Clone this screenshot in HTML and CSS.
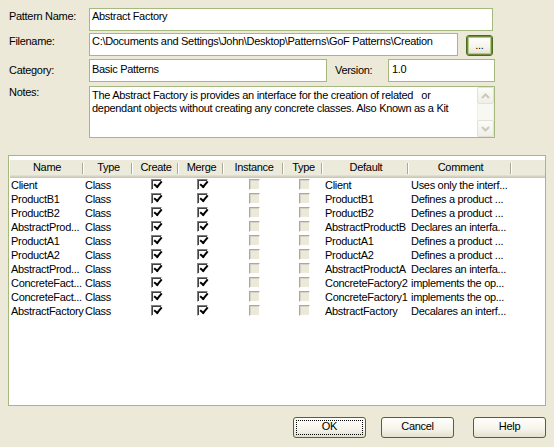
FILE: index.html
```html
<!DOCTYPE html>
<html lang="en">
<head>
  <meta charset="UTF-8">
  <meta name="viewport" content="width=device-width, initial-scale=1.0">
  <title>Pattern Properties</title>
  <link rel="stylesheet" href="styles.css">
</head>
<body>
  <div class="dialog">
    <div class="form-row row-name">
      <label class="lbl">Pattern Name:</label>
      <div class="field f-name">Abstract Factory</div>
    </div>
    <div class="form-row row-file">
      <label class="lbl">Filename:</label>
      <div class="field f-file">C:\Documents and Settings\John\Desktop\Patterns\GoF Patterns\Creation</div>
      <button class="btn btn-browse">...</button>
    </div>
    <div class="form-row row-cat">
      <label class="lbl">Category:</label>
      <div class="field f-cat">Basic Patterns</div>
      <label class="lbl lbl-ver">Version:</label>
      <div class="field f-ver">1.0</div>
    </div>
    <div class="form-row row-notes">
      <label class="lbl">Notes:</label>
      <div class="notes">
        <div class="notes-text">The Abstract Factory is provides an interface for the creation of related &nbsp; or<br>dependant objects without creating any concrete classes. Also Known as a Kit</div>
        <div class="vscroll">
          <span class="sb-btn"><svg width="9" height="6" viewBox="0 0 9 6"><path d="M1 5 L4.5 1.5 L8 5" fill="none" stroke="#cbc9bc" stroke-width="2"/></svg></span>
          <span class="sb-track"></span>
          <span class="sb-btn"><svg width="9" height="6" viewBox="0 0 9 6"><path d="M1 1 L4.5 4.5 L8 1" fill="none" stroke="#cbc9bc" stroke-width="2"/></svg></span>
        </div>
      </div>
    </div>

    <div class="list">
      <table class="grid">
        <colgroup>
          <col class="c-name"><col class="c-type"><col class="c-create"><col class="c-merge">
          <col class="c-inst"><col class="c-type2"><col class="c-default"><col class="c-comment"><col>
        </colgroup>
        <thead>
          <tr>
            <th>Name</th><th>Type</th><th>Create</th><th>Merge</th><th>Instance</th><th>Type</th><th>Default</th><th>Comment</th><th class="filler"></th>
          </tr>
        </thead>
        <tbody>
          <tr><td>Client</td><td>Class</td><td><span class="cb on"></span></td><td><span class="cb on"></span></td><td><span class="cb off"></span></td><td><span class="cb off"></span></td><td class="pad">Client</td><td class="pad">Uses only the interf...</td><td></td></tr>
          <tr><td>ProductB1</td><td>Class</td><td><span class="cb on"></span></td><td><span class="cb on"></span></td><td><span class="cb off"></span></td><td><span class="cb off"></span></td><td class="pad">ProductB1</td><td class="pad">Defines a product ...</td><td></td></tr>
          <tr><td>ProductB2</td><td>Class</td><td><span class="cb on"></span></td><td><span class="cb on"></span></td><td><span class="cb off"></span></td><td><span class="cb off"></span></td><td class="pad">ProductB2</td><td class="pad">Defines a product ...</td><td></td></tr>
          <tr><td>AbstractProd...</td><td>Class</td><td><span class="cb on"></span></td><td><span class="cb on"></span></td><td><span class="cb off"></span></td><td><span class="cb off"></span></td><td class="pad">AbstractProductB</td><td class="pad">Declares an interfa...</td><td></td></tr>
          <tr><td>ProductA1</td><td>Class</td><td><span class="cb on"></span></td><td><span class="cb on"></span></td><td><span class="cb off"></span></td><td><span class="cb off"></span></td><td class="pad">ProductA1</td><td class="pad">Defines a product ...</td><td></td></tr>
          <tr><td>ProductA2</td><td>Class</td><td><span class="cb on"></span></td><td><span class="cb on"></span></td><td><span class="cb off"></span></td><td><span class="cb off"></span></td><td class="pad">ProductA2</td><td class="pad">Defines a product ...</td><td></td></tr>
          <tr><td>AbstractProd...</td><td>Class</td><td><span class="cb on"></span></td><td><span class="cb on"></span></td><td><span class="cb off"></span></td><td><span class="cb off"></span></td><td class="pad">AbstractProductA</td><td class="pad">Declares an interfa...</td><td></td></tr>
          <tr><td>ConcreteFact...</td><td>Class</td><td><span class="cb on"></span></td><td><span class="cb on"></span></td><td><span class="cb off"></span></td><td><span class="cb off"></span></td><td class="pad">ConcreteFactory2</td><td class="pad">implements the op...</td><td></td></tr>
          <tr><td>ConcreteFact...</td><td>Class</td><td><span class="cb on"></span></td><td><span class="cb on"></span></td><td><span class="cb off"></span></td><td><span class="cb off"></span></td><td class="pad">ConcreteFactory1</td><td class="pad">implements the op...</td><td></td></tr>
          <tr><td>AbstractFactory</td><td>Class</td><td><span class="cb on"></span></td><td><span class="cb on"></span></td><td><span class="cb off"></span></td><td><span class="cb off"></span></td><td class="pad">AbstractFactory</td><td class="pad">Decalares an interf...</td><td></td></tr>
        </tbody>
      </table>
    </div>

    <div class="buttons">
      <button class="btn btn-ok">OK</button>
      <button class="btn btn-cancel">Cancel</button>
      <button class="btn btn-help">Help</button>
    </div>
  </div>
</body>
</html>
```

FILE: styles.css
```css
* {
  box-sizing: border-box;
}
html {
  background: #ece9d8;
}
body {
  margin: 0;
  padding: 8px;
  font-family: "Liberation Sans", Arial, sans-serif;
  font-size: 11px;
  line-height: 13px;
  letter-spacing: -0.3px;
  color: #000;
}

/* top form */
.form-row {
  display: flex;
  align-items: flex-start;
}
.row-file {
  margin-top: 2px;
}
.row-cat {
  margin-top: 3px;
}
.row-notes {
  margin-top: 4px;
}
.lbl {
  width: 81px;
  padding-left: 1px;
}
.row-name .lbl,
.row-file .lbl {
  padding-top: 2px;
}
.row-cat .lbl {
  padding-top: 5px;
}
.lbl-ver {
  width: 53px;
  margin-left: 8px;
  padding-left: 0;
}
.field {
  height: 23px;
  padding: 1px 2px 0;
  border: 1px solid #a5b97f;
  background: #fff;
  white-space: nowrap;
  overflow: hidden;
}
.f-name {
  width: 404px;
}
.f-file {
  width: 369px;
}
.f-cat {
  width: 238px;
  padding-top: 3px;
}
.f-ver {
  width: 107px;
  padding-top: 3px;
  padding-left: 3px;
}

.notes {
  display: flex;
  width: 406px;
  height: 52px;
  border: 1px solid #a5b97f;
  background: #fff;
}
.notes-text {
  flex: 1;
  padding: 2px 2px 0;
}
.vscroll {
  width: 17px;
  display: flex;
  flex-direction: column;
  background: #f8f8f3;
}
.sb-btn {
  height: 17px;
  display: flex;
  align-items: center;
  justify-content: center;
  border: 1px solid #e3e1d6;
  border-radius: 2px;
  background: linear-gradient(#fbfbf8, #f0efe7);
}
.sb-track {
  flex: 1;
  border-left: 1px solid #f1f0ea;
  border-right: 1px solid #f1f0ea;
}

/* buttons */
.btn {
  font: inherit;
  letter-spacing: inherit;
  color: #000;
  height: 21px;
  padding: 0 0 2px;
  line-height: 17px;
  border: 1px solid #4c6a22;
  border-radius: 3px;
  background: linear-gradient(#fffffc, #f5f3ea 60%, #e4e0cf);
}
.btn-browse {
  width: 27px;
  margin-top: 2px;
  margin-left: 8px;
  padding: 0;
  line-height: 19px;
  box-shadow: inset 0 0 0 1px #6f8c3c, inset 0 0 0 2px #b6c98c;
}

/* list */
.list {
  margin-top: 17px;
  height: 251px;
  padding: 4px 0 0 1px;
  border: 1px solid #a5b97f;
  background: #fff;
}
.grid {
  width: 535px;
  table-layout: fixed;
  border-collapse: collapse;
}
.c-name { width: 74px; }
.c-type { width: 49px; }
.c-create { width: 46px; }
.c-merge { width: 45px; }
.c-inst { width: 60px; }
.c-type2 { width: 39px; }
.c-default { width: 86px; }
.c-comment { width: 103px; }

.grid th {
  height: 18px;
  padding: 1px 0 4px;
  font-weight: normal;
  text-align: center;
  vertical-align: top;
  line-height: 13px;
  white-space: nowrap;
  overflow: hidden;
  background:
    linear-gradient(#aca899, #aca899) right 1px top 3px / 1px 11px no-repeat,
    linear-gradient(#fff, #fff) right 0 top 3px / 1px 11px no-repeat,
    linear-gradient(#ebeadb 15px, #e2decd 15px, #e2decd 16px, #d6d2c2 16px, #d6d2c2 17px, #cbc7b8 17px);
}
.grid th.filler {
  background: linear-gradient(#ebeadb 15px, #e2decd 15px, #e2decd 16px, #d6d2c2 16px, #d6d2c2 17px, #cbc7b8 17px);
}
.grid td {
  height: 14px;
  padding: 0 0 0 1px;
  line-height: 14px;
  vertical-align: top;
  white-space: nowrap;
}
.grid td.pad {
  padding-left: 2px;
  overflow: hidden;
}

.cb {
  display: block;
  width: 11px;
  height: 11px;
  margin: 1px auto 0;
  border: 1px solid;
  border-color: #7f7f7f #fff #fff #7f7f7f;
  box-shadow: inset 1px 1px 0 #404040;
  background: #fff;
}
.cb.on::after {
  content: "";
  display: block;
  width: 6px;
  height: 3px;
  margin: 1px 0 0 2px;
  border-left: 2px solid #000;
  border-bottom: 2px solid #000;
  transform: rotate(-50deg);
}
.cb.off {
  border-color: #aca899 #fff #fff #aca899;
  box-shadow: inset 1px 1px 0 #d6d3c6;
  background: #ece9d8;
}

.buttons {
  display: flex;
  margin-top: 11px;
}
.btn-ok,
.btn-cancel,
.btn-help {
  width: 73px;
}
.btn-ok {
  margin-left: 285px;
  outline: 1px dotted #000;
  outline-offset: -4px;
}
.btn-cancel {
  margin-left: 15px;
}
.btn-help {
  margin-left: 19px;
}
```
